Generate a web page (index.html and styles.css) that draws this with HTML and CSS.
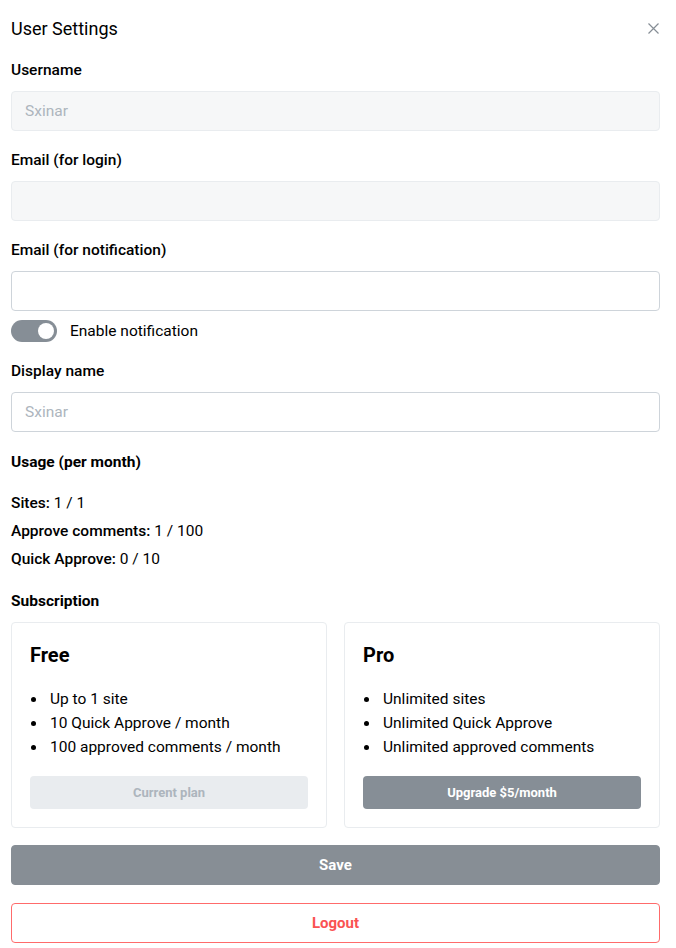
FILE: index.html
```html
<!DOCTYPE html>
<html>
<head>
<meta charset="utf-8">
<link rel="stylesheet" href="styles.css">
</head>
<body>
<div class="modal">
  <div class="header">
    <h2 class="title">User Settings</h2>
    <button class="close" aria-label="close">
      <svg width="15" height="15" viewBox="0 0 15 15"><path d="M2.5 2.5L12.5 12.5M12.5 2.5L2.5 12.5" stroke="#868e96" stroke-width="1.2" fill="none"/></svg>
    </button>
  </div>

  <div class="field">
    <label class="label">Username</label>
    <div class="input disabled">Sxinar</div>
  </div>
  <div class="field">
    <label class="label">Email (for login)</label>
    <div class="input disabled"></div>
  </div>
  <div class="field">
    <label class="label">Email (for notification)</label>
    <div class="input"></div>
    <div class="switch-row">
      <span class="switch"><span class="thumb"></span></span>
      <span class="switch-label">Enable notification</span>
    </div>
  </div>
  <div class="field">
    <label class="label">Display name</label>
    <div class="input placeholder">Sxinar</div>
  </div>

  <div class="section-title">Usage (per month)</div>
  <div class="usage">
    <div class="usage-row"><span class="key">Sites:</span> 1 / 1</div>
    <div class="usage-row"><span class="key">Approve comments:</span> 1 / 100</div>
    <div class="usage-row"><span class="key">Quick Approve:</span> 0 / 10</div>
  </div>

  <div class="section-title sub">Subscription</div>
  <div class="plans">
    <div class="plan">
      <h3 class="plan-name">Free</h3>
      <ul class="plan-list">
        <li>Up to 1 site</li>
        <li>10 Quick Approve / month</li>
        <li>100 approved comments / month</li>
      </ul>
      <button class="plan-btn current">Current plan</button>
    </div>
    <div class="plan">
      <h3 class="plan-name">Pro</h3>
      <ul class="plan-list">
        <li>Unlimited sites</li>
        <li>Unlimited Quick Approve</li>
        <li>Unlimited approved comments</li>
      </ul>
      <button class="plan-btn upgrade">Upgrade $5/month</button>
    </div>
  </div>

  <button class="btn save">Save</button>
  <button class="btn logout">Logout</button>
</div>
</body>
</html>
```
FILE: styles.css
```css
* { box-sizing: border-box; }
body {
  margin: 0;
  font-family: Roboto, "Liberation Sans", sans-serif;
  color: #000;
  background: #fff;
}
.modal {
  padding: 14px 16px 0 11px;
  display: flex;
  flex-direction: column;
}
.header {
  display: flex;
  justify-content: space-between;
  align-items: center;
  height: 28px;
  margin-bottom: 18px;
}
.title {
  margin: 0;
  font-size: 18px;
  font-weight: 400;
  color: #000;
}
.close {
  border: none;
  background: none;
  padding: 0;
  width: 20px;
  height: 20px;
  display: flex;
  align-items: center;
  justify-content: center;
  margin-right: -3px;
}
.field {
  display: flex;
  flex-direction: column;
  margin-bottom: 19px;
}
.label {
  font-size: 15.5px;
  font-weight: 500;
  line-height: 20px;
  margin-bottom: 11px;
}
.input {
  height: 40px;
  border: 1px solid #ced4da;
  border-radius: 4px;
  padding: 0 13px;
  font-size: 15.5px;
  line-height: 38px;
  background: #fff;
}
.input.disabled {
  background: #f6f7f8;
  border-color: #e9ecef;
  color: #adb5bd;
}
.input.placeholder {
  color: #adb5bd;
  border-color: #ced4da;
}
.switch-row {
  display: flex;
  align-items: center;
  margin-top: 9px;
  margin-bottom: 0;
}
.switch {
  width: 46px;
  height: 22px;
  border-radius: 11px;
  background: #868e96;
  position: relative;
  display: inline-block;
}
.thumb {
  position: absolute;
  right: 3px;
  top: 3px;
  width: 16px;
  height: 16px;
  border-radius: 50%;
  background: #fff;
}
.switch-label {
  margin-left: 13px;
  font-size: 15.5px;
}
.section-title {
  font-size: 15.5px;
  font-weight: 700;
  line-height: 20px;
  margin-top: 1px;
  margin-bottom: 21px;
}
.section-title.sub {
  margin-top: 22px;
  margin-bottom: 11px;
}
.usage {
  display: flex;
  flex-direction: column;
  gap: 8px;
}
.usage-row {
  font-size: 15.5px;
  line-height: 20px;
}
.key { font-weight: 500; }
.plans {
  display: grid;
  grid-template-columns: 1fr 1fr;
  gap: 17px;
  margin-bottom: 17px;
}
.plan {
  border: 1px solid #e9ecef;
  border-radius: 4px;
  padding: 18px;
  display: flex;
  flex-direction: column;
}
.plan-name {
  margin: 0;
  font-size: 20px;
  font-weight: 700;
  line-height: 28px;
  margin-bottom: 18px;
}
.plan-list {
  list-style: none;
  margin: 0;
  padding: 0;
  font-size: 15.5px;
  line-height: 24px;
  margin-bottom: 17px;
}
.plan-list li {
  display: flex;
  align-items: center;
}
.plan-list li::before {
  content: "";
  width: 5px;
  height: 5px;
  border-radius: 50%;
  background: #000;
  margin-left: 1px;
  margin-right: 14px;
}
.plan-btn {
  height: 33px;
  border: none;
  border-radius: 4px;
  font-family: inherit;
  font-size: 13px;
  font-weight: 700;
}
.plan-btn.current {
  background: #e9ecef;
  color: #adb5bd;
}
.plan-btn.upgrade {
  background: #868e96;
  color: #fff;
}
.btn {
  height: 40px;
  border-radius: 4px;
  font-family: inherit;
  font-size: 15px;
  font-weight: 700;
  width: 100%;
}
.btn.save {
  background: #878e95;
  color: #fff;
  border: 1px solid #878e95;
  margin-bottom: 18px;
}
.btn.logout {
  background: #fff;
  color: #fa5252;
  border: 1px solid #ff6b6b;
}
```
